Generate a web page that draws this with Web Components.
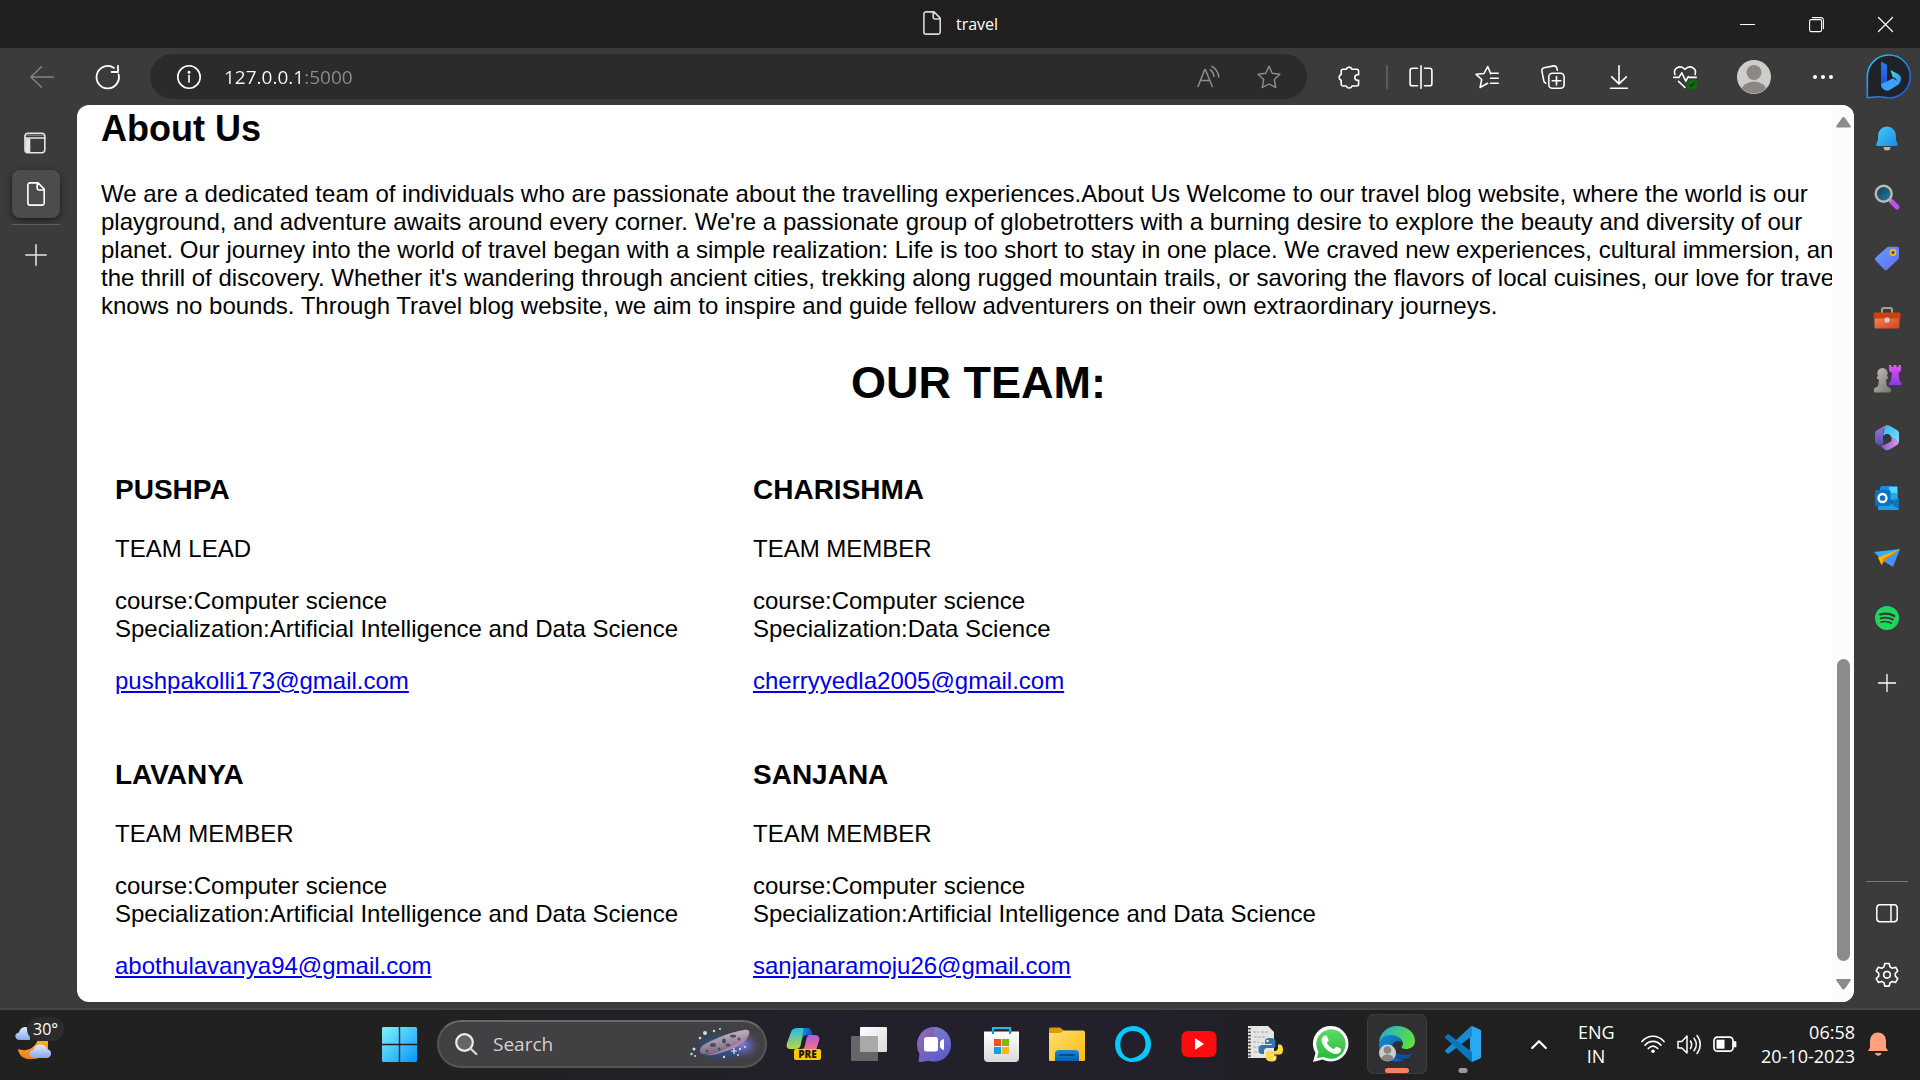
<!DOCTYPE html>
<html lang="en">
<head>
<meta charset="utf-8">
<title>travel</title>
<style>
html, body { margin: 0; height: 100%; overflow: hidden; background: #202020; }
body { font-family: "Open Sans", "Noto Sans", sans-serif; color: #fff; }
</style>
</head>
<body>
<desk-top>
  <title-bar slot="title">travel</title-bar>
  <tool-bar slot="tools"></tool-bar>
  <tab-rail slot="left"></tab-rail>
  <web-page slot="page">
    <about-section heading="About Us">We are a dedicated team of individuals who are passionate about the travelling experiences.About Us Welcome to our travel blog website, where the world is our playground, and adventure awaits around every corner. We're a passionate group of globetrotters with a burning desire to explore the beauty and diversity of our planet. Our journey into the world of travel began with a simple realization: Life is too short to stay in one place. We craved new experiences, cultural immersion, and the thrill of discovery. Whether it's wandering through ancient cities, trekking along rugged mountain trails, or savoring the flavors of local cuisines, our love for travel knows no bounds. Through Travel blog website, we aim to inspire and guide fellow adventurers on their own extraordinary journeys.</about-section>
    <team-list heading="OUR TEAM:">
      <team-member name="PUSHPA" role-name="TEAM LEAD" field="Artificial Intelligence and Data Science" mail="pushpakolli173@gmail.com"></team-member>
      <team-member name="CHARISHMA" role-name="TEAM MEMBER" field="Data Science" mail="cherryyedla2005@gmail.com"></team-member>
      <team-member name="LAVANYA" role-name="TEAM MEMBER" field="Artificial Intelligence and Data Science" mail="abothulavanya94@gmail.com"></team-member>
      <team-member name="SANJANA" role-name="TEAM MEMBER" field="Artificial Intelligence and Data Science" mail="sanjanaramoju26@gmail.com"></team-member>
    </team-list>
  </web-page>
  <side-bar slot="right"></side-bar>
  <task-bar slot="tasks"></task-bar>
</desk-top>
<script>
const line = (body, w = 24, h = w, sw = 1.6) =>
  `<svg width="${w}" height="${h}" viewBox="0 0 ${w} ${h}" fill="none" stroke="currentColor" stroke-width="${sw}" stroke-linecap="round" stroke-linejoin="round">${body}</svg>`;
const art = (body, w = 24, h = w) =>
  `<svg width="${w}" height="${h}" viewBox="0 0 ${w} ${h}">${body}</svg>`;
const grad = (id, a, b, x2 = 1, y2 = 1) =>
  `<linearGradient id="${id}" x1="0" y1="0" x2="${x2}" y2="${y2}"><stop stop-color="${a}"/><stop offset="1" stop-color="${b}"/></linearGradient>`;

const ICONS = {
  doc: line('<path d="M4 .9h8l6.200 6.200V21a2.100 2.100 0 0 1-2.100 2.100H4A2.100 2.100 0 0 1 1.900 21V3A2.100 2.100 0 0 1 4 .9zM11.200 1v5a2 2 0 0 0 2 2h5"/>', 20, 24),
  min: line('<path d="M.5 7.5h14"/>', 15, 15, 1.1),
  restore: line('<rect x=".6" y="2.6" width="12" height="12" rx="1.6"/><path d="M3.4.6H12a2.4 2.4 0 0 1 2.4 2.4v8.6"/>', 15, 15, 1.1),
  close: line('<path d="M.5.5l14 14M14.5.5l-14 14"/>', 15, 15, 1.2),
  back: line('<path d="M23.4 12H1M11.5 1.7L.9 12l10.6 10.2"/>', 24, 24, 1.4),
  refresh: line('<path d="M22.6 9.4A11.2 11.2 0 1 1 18 2.9M22 1v6h-6.4"/>', 24, 24, 1.8),
  info: line('<circle cx="12" cy="12" r="11.2"/><path d="M12 10.5v6.6"/><circle cx="12" cy="7.2" r=".7" fill="currentColor"/>'),
  read: line('<path d="M1 21.5L7.8 4.5h.6l6.8 17M3.4 15.5h9.4M13.5 4.8c2.1 1.6 3.3 3.8 3.5 6.6M15 1.3c3.7 2.2 6.3 6 6.8 10.7"/>', 24, 24, 1.5),
  star: line('<path d="M12 1.2l3.2 7 7.7 1-5.6 5.2 1.4 8-6.7-3.4-6.7 3.4 1.4-8L1.1 9.200l7.700-1z"/>', 24, 24, 1.4),
  puzzle: line('<path d="M9.300 4.200a3 3 0 0 1 5.700 0h4.600a2 2 0 0 1 2 2v3.600h-1.100a2.700 2.700 0 0 0 0 5.400h1.100V19a2 2 0 0 1-2 2H15a3 3 0 0 1-5.700 0H6.200a2 2 0 0 1-2-2v-3.700a3 3 0 0 1 0-5.700V6.200a2 2 0 0 1 2-2z"/>'),
  split: line('<path d="M12 .8v22.400M8.500 3.200H3.500A2.400 2.400 0 0 0 1.100 5.600v12.800a2.400 2.400 0 0 0 2.400 2.400h5M15.500 3.200h5a2.400 2.400 0 0 1 2.400 2.400v12.800a2.400 2.400 0 0 1-2.400 2.400h-5"/>'),
  favs: line('<path d="M15.700 8.700l-3-7.200-3.700 7L1.100 9.300l5.600 5.200-1.600 8 7.500-4.200M15.500 8.200h7.700M15.500 13.200h7.700M15.500 18.200h7.700"/>'),
  collect: line('<rect x="7.800" y="8.300" width="15.300" height="14.900" rx="3.500"/><path d="M15.500 11.500v8.500M11.200 15.700h8.600M4.800 18.200a2.600 2.600 0 0 1-1.900-1.900L.9 6.100a2.800 2.800 0 0 1 2.200-3.300L12.700.9c1.700-.3 2.700.5 3.200 2.200l.4 2"/>'),
  download: line('<path d="M12 .8v17M4.700 11.800l7.300 7 7.300-7M3.600 23.200h16.800"/>'),
  heart: line('<path d="M1.900 9.500C-.2 3.500 6.800-.8 12 4.300c5.200-5.100 12.200-.8 10.100 5.200M.8 12.400H6l2.800-4.600 4 8.400 2.500-4.600 1 .8h6.900M5.500 16.300l6.500 6.200"/><circle cx="19" cy="19.500" r="5.300" fill="#0f6b12" stroke="none"/><path d="M16.700 19.800l1.600 1.600 3-3.500" stroke="#062f08" stroke-width="1.300"/>'),
  avatar: art('<defs><clipPath id="c"><circle cx="17" cy="17" r="16.500"/></clipPath></defs><circle cx="17" cy="17" r="17" fill="#cfcdca"/><circle cx="17" cy="12.500" r="7.500" fill="#8b8785"/><ellipse cx="17" cy="31" rx="12.500" ry="9.500" fill="#8b8785" clip-path="url(#c)"/>', 34),
  dots: art('<g fill="#fff"><circle cx="4" cy="12" r="2"/><circle cx="12" cy="12" r="2"/><circle cx="20" cy="12" r="2"/></g>'),
  bing: art(`<defs>${grad('o', '#28c7f5', '#1b4fe0')}${grad('p', '#2a7df0', '#1d45dd', 0)}${grad('q', '#45e0e8', '#2b8cf3')}</defs><path d="M1.300 43.700V22.500A21.500 21.500 0 1 1 23 44c-3.500 0-6-1.300-10-1.300-4.500 0-8 1-11.700 1z" fill="#1f2227" stroke="url(#o)" stroke-width="1.600"/><path d="M15 7.500l6 3.300v17.400l-5.900 6z" fill="url(#p)"/><path d="M24.500 16l7.800 4.200c4 2.300 3.300 8-.3 10.500l-2-6.200-3.300-1.600z" fill="url(#q)"/><path d="M15 30l6.200-2.700 5.800-3 5.500 3.500c.4 1.200.2 2.100-.8 3.200l-8.400 5.300C19.500 38 15 34.500 15 30z" fill="#3aa0fb"/>`, 45),
  panes: line('<rect x="1" y="1.200" width="19.800" height="19.500" rx="3"/><path d="M1 6h20"/><path d="M1.500 6.500h4.800v14H3.500a2.200 2.200 0 0 1-2-2z" fill="currentColor" stroke="none"/><path d="M3 3.200h16" stroke-opacity=".35"/>', 22, 22),
  plus: line('<path d="M11 .8v20.400M.8 11h20.400"/>', 22, 22, 1.500),
  plusSmall: line('<path d="M9 .5v17M.5 9h17"/>', 18, 18, 1.300),
  panel: line('<rect x=".8" y=".8" width="20.400" height="17" rx="3.200"/><path d="M15 1v16.600"/>', 22, 19, 1.500),
  gear: line('<path d="M9.800 1.500h4.400l.8 3.400 2.300 1.300 3.300-1 2.200 3.800-2.500 2.400v2.800l2.500 2.400-2.200 3.800-3.300-1-2.300 1.300-.8 3.400H9.800L9 20.700l-2.300-1.300-3.300 1-2.200-3.800 2.500-2.400v-2.800L1.200 9l2.200-3.800 3.300 1L9 4.900z"/><circle cx="12" cy="12.800" r="3.300"/>', 24, 26),
  bell: art(`<defs>${grad('g', '#45d0f5', '#1a86ea')}</defs><path d="M9.500 21h7a3.500 3.500 0 0 1-7 0z" fill="#b8b8b8"/><path d="M3.500 20a1.500 1.500 0 0 1-1.200-2.200L4 14V9.500a9 9 0 0 1 18 0V14l1.700 3.800a1.500 1.500 0 0 1-1.200 2.200z" fill="url(#g)"/>`, 26, 25),
  lens: art(`<defs>${grad('g', '#12394f', '#2a80ac')}</defs><path d="M17.500 17.500l5.500 5.500" stroke="#c44bf0" stroke-width="5" stroke-linecap="round"/><path d="M15 15l2.500 2.500" stroke="#999" stroke-width="2.500"/><circle cx="9.700" cy="9.700" r="8" fill="url(#g)" stroke="#b9b9b5" stroke-width="2.400"/>`, 26, 28),
  tag: art(`<defs>${grad('g', '#5aa5ff', '#6e63f5')}</defs><path d="M14 .8h8A2 2 0 0 1 24 3v8.200c0 1-.3 1.600-1 2.300l-10.300 9.800a2.500 2.500 0 0 1-3.600 0L.8 14.700a2.300 2.300 0 0 1 0-3.300l10.800-9.700c.7-.6 1.400-.9 2.400-.9z" fill="url(#g)"/><circle cx="18" cy="6.500" r="2.600" fill="#42518c" stroke="#f2c510" stroke-width="1.700"/>`, 24),
  toolbox: art(`<defs>${grad('g', '#fa8559', '#cf451b')}</defs><path d="M9 6V2.800C9 1.500 9.800 1 11 1h6c1.200 0 2 .5 2 1.800V6" fill="none" stroke="#a6a19c" stroke-width="2"/><rect x="1.500" y="9" width="25" height="12.500" rx="1.500" fill="url(#g)"/><path d="M.5 7A1.500 1.500 0 0 1 2 5.500h24A1.500 1.500 0 0 1 27.500 7v4.500H.5z" fill="#cb400e"/><rect x="11.500" y="10.500" width="5" height="5" rx="1.500" fill="#c9d0d6"/>`, 28, 22),
  chess: art(`<defs>${grad('g', '#e453f5', '#8838e8', 0)}${grad('s', '#c4c2be', '#77736f')}</defs><path d="M16 1h2.500v2h2V1h3v2h2V1H28v6l-2.500 2 1 8 2 1.500V21H16v-2.500L18 17l1-8-3-2z" fill="url(#g)"/><path d="M9.500 4a5 5 0 0 1 4 8.200l1.500.3v2.300l-2 .7.800 6.500 4 2.500V27c0 1-.8 1.500-2 1.500H3C1.800 28.500 1 28 1 27v-2.500L5.200 22l.8-6.500-2-.7v-2.300l1.500-.3A5 5 0 0 1 9.500 4z" fill="url(#s)"/>`, 28, 29),
  m365: art(`<defs>${grad('a', '#35b5f0', '#7ae1f7')}${grad('b', '#a276d4', '#4a50b8', 0)}${grad('d', '#8c55bd', '#d79beb', 1, 0)}</defs><path d="M10 .8a5 5 0 0 1 4.500 0L22 5c1.300.8 2 1.800 2 3.300v9L16.300 12l-4-3.200L8 11z" fill="url(#a)"/><path d="M12.500.3C8.800 2.800 8.200 5 8.200 8.500v9.700L5 20.800 2 19c-1.300-.8-2-1.800-2-3.300V8.500C0 7 .7 6 2 5.200L9.500 1z" fill="url(#b)"/><path d="M5.500 20.800c3.500-.3 9.500-3.300 11-4.800V12l7.300 4.800c.3 1.200-.7 2.500-1.800 3.200l-7.500 4.500c-1.700 1-3.300 1-5 0z" fill="url(#d)"/><circle cx="12" cy="13" r="4" fill="#353344"/>`, 24, 26),
  outlook: art('<path d="M7 0h14.500A1.500 1.500 0 0 1 23 1.500V15H5V1.500z" fill="#1c8ddb"/><path d="M14 1h8v6h-8z" fill="#50d9ff"/><path d="M14 7h8v6h-8z" fill="#28a8ea"/><path d="M24 12v11a1 1 0 0 1-1 1H4a1 1 0 0 1-1-1V13l13 4z" fill="#1b9de2"/><path d="M24 12v11.500L15 17z" fill="#1274b8"/><rect y="4" width="15.500" height="16" rx="1.500" fill="#0873c6"/><circle cx="7.500" cy="12" r="4" fill="none" stroke="#fff" stroke-width="2.300"/>'),
  plane: art(`<defs>${grad('g', '#26b4f3', '#5c7df5')}</defs><path d="M0 3L26 0 8 11z" fill="#36aef0"/><path d="M26 0L19 18l-11-7z" fill="url(#g)"/><path d="M26 0L4 8.500 7.500 16 10 12z" fill="#fbb608"/><path d="M7.500 16L9 10l17-10-15.500 12z" fill="#d68a09"/>`, 26, 18),
  spotify: art('<circle cx="12" cy="12" r="12" fill="#1ed760"/><g fill="none" stroke="#343834" stroke-linecap="round"><path d="M5 8.500c5-1.400 10-.9 14.300 1.500" stroke-width="2.200"/><path d="M5.500 12.300c4.400-1.200 8.600-.8 12.400 1.300" stroke-width="1.900"/><path d="M6 16c3.800-.9 7.300-.6 10.400 1.100" stroke-width="1.600"/></g>'),
  weather: art(`<defs>${grad('g', '#f8b51d', '#ee7d1b', 0)}${grad('w', '#e2eaff', '#85a9e6', 0)}</defs><path d="M3 23c8 3 16 0 20-9h10v10c-3 5-7 9-15 9C9 34 4 30 3 23z" fill="url(#g)"/><path d="M5 14c-6 0-6-7-1-7.500C5 1 11-1 15 3v11z" fill="url(#w)"/><path d="M20 32c-7 0-7-7.500-1.500-8 1-7 12-7 13.500-1 6 1 5 9-.5 9z" fill="url(#w)"/>`, 38, 36),
  start: art(`<defs><linearGradient id="g" gradientUnits="userSpaceOnUse" x1="0" y1="0" x2="35" y2="35"><stop stop-color="#7ef2ff"/><stop offset=".5" stop-color="#43c5fb"/><stop offset="1" stop-color="#0a94fb"/></linearGradient></defs><path d="M1.500 0h15.300v16.800H0V1.500A1.500 1.500 0 0 1 1.500 0zM18.200 0h15.300A1.500 1.500 0 0 1 35 1.500v15.300H18.200zM0 18.200h16.800V35H1.500A1.500 1.500 0 0 1 0 33.500zM18.200 18.200H35v15.300a1.500 1.500 0 0 1-1.500 1.500H18.200z" fill="url(#g)"/>`, 35),
  find: art('<circle cx="9.500" cy="9.500" r="8.300" fill="#656567" stroke="#ececec" stroke-width="2.200"/><path d="M15.500 15.500l5.800 5.500" stroke="#d4d4d4" stroke-width="2.400" stroke-linecap="round"/>', 23),
  asteroid: art(`<defs><radialGradient id="h"><stop stop-color="#1268ac"/><stop offset=".55" stop-color="#27508a" stop-opacity=".75"/><stop offset="1" stop-color="#3b3b60" stop-opacity="0"/></radialGradient><radialGradient id="v"><stop stop-color="#7f7bea"/><stop offset="1" stop-color="#50508c" stop-opacity="0"/></radialGradient>${grad('r', '#d3c9d6', '#75677d', .3)}</defs><ellipse cx="31" cy="20" rx="31" ry="16" fill="url(#h)"/><ellipse cx="53" cy="18" rx="18" ry="15" fill="url(#v)"/><path d="M10 24c0-4 3-6 7-8C27 11 40 5 54 3c5-1 7 2 4 6-5 6-13 9-21 12-7 3-14 6-21 6-4 1-6-1-6-3z" fill="url(#r)"/><path d="M15 28c11-1 22-7 31-11 6-3 11-6 13-12 1 10-17 18-26 20-6 2-12 4-18 3z" fill="#bd7fae"/><g fill="#514a5d"><ellipse cx="23" cy="18" rx="3" ry="2"/><ellipse cx="34" cy="14" rx="2" ry="2.500"/><ellipse cx="43" cy="9" rx="3" ry="1.500"/><ellipse cx="38" cy="18" rx="2.500" ry="1.500"/><circle cx="17" cy="24" r="1.500"/><circle cx="29" cy="22" r="1.500"/><circle cx="49" cy="12" r="1.500"/></g><g fill="#b7e5f5"><circle cx="15" cy="6" r="2"/><circle cx="4" cy="22" r="1.500"/><circle cx="10" cy="11" r="1.300"/><circle cx="24" cy="4" r="1.200"/><circle cx="30" cy="2" r="1"/><circle cx="1.500" cy="27" r="1.200"/><circle cx="5" cy="29" r="1"/><circle cx="34" cy="30" r="1.200"/><circle cx="50" cy="22" r="1.200"/><circle cx="55" cy="20" r="1"/><circle cx="48" cy="28" r="1"/></g><path d="M44 21v6M41 24h6" stroke="#cbefff" stroke-width="1.200"/>`, 72, 34),
  copilot: art(`<defs>${grad('g', '#20b8f3', '#b8d443', .15)}${grad('m', '#a65ae8', '#f76f82', .1)}${grad('t', '#1b93dd', '#1449ca', 1, 0)}</defs><path d="M11 0h9c4 0 5 2 6 7h-6c-4 0-4 4-5 9-1 4-2 5-6 5H5c-4 0-5-2-4-6L5 4c1-3 3-4 6-4z" fill="url(#g)"/><path d="M17 0h3c4 0 5 2 6 7h-6c-2 0-3 1-4 4-1-4 2-6 1-11z" fill="url(#t)"/><path d="M23 7h6c4 0 5 3 4 6l-3 9H15l3-2c2-4 2-13 5-13z" fill="url(#m)"/><rect x="8" y="21" width="27" height="11" rx="2" fill="#ffc800"/><text x="21.500" y="30" text-anchor="middle" font-family="Open Sans, sans-serif" font-size="10" font-weight="800" fill="#1c1600">PRE</text>`, 34, 32),
  taskview: art(`<defs>${grad('g', '#fff', '#dadada')}</defs><rect x="9" y="0" width="27" height="25" rx="1.200" fill="url(#g)"/><rect x="0" y="9" width="27" height="25" rx="1.200" fill="#666"/><path d="M9 9h18v16H9z" fill="#a9a9a9"/>`, 36, 34),
  chat: art(`<defs>${grad('g', '#9a69b0', '#5259cf')}${grad('k', '#7597df', '#5556c8', 0)}</defs><path d="M17 0c10 0 17 8 17 17.500S27 34.500 17 34.500c-3 0-4-.8-6-.8-3 1-6 1.500-9.500 1L2.500 27A17 17 0 0 1 0 18C0 8 7 0 17 0z" fill="url(#g)"/><path d="M17 0c10 0 17 8 17 17.500S27 34.500 17 34.500z" fill="url(#k)" opacity=".4"/><rect x="7" y="10" width="14" height="14.500" rx="2.500" fill="#fff"/><path d="M27 12v11a5 5 0 0 1-4-5.500 5 5 0 0 1 4-5.500z" fill="#fff"/>`, 36, 35),
  store: art(`<defs>${grad('g', '#fff', '#d9d9d9', 0)}</defs><path d="M9 7V1.200h17V7" fill="none" stroke="#27b4f1" stroke-width="2.200"/><path d="M0 4.500h35V31a4 4 0 0 1-4 4H4a4 4 0 0 1-4-4z" fill="url(#g)"/><path d="M9 4v3M26 4v3" stroke="#1596dc" stroke-width="2.200"/><path d="M10 12h7v7h-7z" fill="#f25022"/><path d="M18 12h7v7h-7z" fill="#7fba00"/><path d="M10 20h7v7h-7z" fill="#00a4ef"/><path d="M18 20h7v7h-7z" fill="#ffb900"/>`, 35),
  folder: art(`<defs>${grad('g', '#ffdf70', '#fdb911')}${grad('b', '#1789db', '#075fae', 0)}</defs><path d="M0 2A1.500 1.500 0 0 1 1.500.500H11l4 3V8H0z" fill="#dc9900"/><path d="M0 6h11l4-2.500h19A2 2 0 0 1 36 5.500V33a1 1 0 0 1-1 1H1a1 1 0 0 1-1-1z" fill="url(#g)"/><path d="M6 34V27a4 4 0 0 1 4-4h16a4 4 0 0 1 4 4v7z" fill="url(#b)"/><path d="M11 28h14" stroke="#07488b" stroke-width="2" stroke-linecap="round"/>`, 36, 35),
  alexa: art('<path fill-rule="evenodd" d="M18 0c10 0 18 8 18 18s-7 17.500-18 18H15v-3.500C6 30 5 22 5.500 16 6.500 9 11 5 18 5s12.500 5 12.500 13c0 6-4 13-15.500 14.500V36C5 34 0 27 0 18S8 0 18 0z" fill="#08c9fb"/>', 36),
  youtube: art('<rect x=".5" y="2" width="35" height="26" rx="6" fill="#fc0d0d"/><path d="M14 9v12l9-6z" fill="#fff"/>', 36, 30),
  python: art('<path d="M1 0h20l6 6v26H1z" fill="#e5e5e5"/><path d="M2.500 2v29" stroke="#333" stroke-width="2.500" stroke-dasharray="1.600 1.800"/><path d="M6 6h6M14 6h7M7 11h12M6 16h6M14 17h3M6 21h6M7 26h6" stroke="#a5a5a5" stroke-width="1.200" stroke-dasharray="3 1"/><path d="M23 12c-4 0-5 1.500-5 4v2h7v1H15c-3 0-3.500 3-3.500 5s1 4 3.500 4h2v-3c0-2 1.500-3 3-3h6c1.500 0 2.500-1 2.500-3v-4c0-2-2-3-5.500-3z" fill="#3474a7"/><path d="M24.500 35.500c4 0 5-1.500 5-4v-2h-6v-1H33c2.500 0 3-3 3-5s-1-5-3-5h-2v3c0 2-1.500 3.500-3 3.500h-6c-2 0-3 1-3 3v4c0 2 2 3.500 5.500 3.500z" fill="#ffd848"/><circle cx="20.500" cy="15" r="1.200" fill="#fff"/><circle cx="27" cy="32.500" r="1.200" fill="#fff"/>', 36),
  whatsapp: art(`<defs>${grad('g', '#60d868', '#26bb3c', 0)}</defs><path d="M0 36l2.500-9A17.800 17.800 0 1 1 9.500 33.500z" fill="#fff"/><path d="M4 32l1.600-6A14.700 14.700 0 1 1 11 31z" fill="url(#g)"/><path d="M12.500 9.500c.8 0 1.200.1 1.600 1l1.500 3.500c.2.600 0 1.200-1.700 3 1.600 3 4 4.900 7 6.200 2-2.400 2.300-2.700 3-2.400l3.500 1.700c.7.400.8.6.6 1.700-.5 2.800-3.300 4.100-5.500 3.700C16 27 11 22 9 16.500c-1.200-3.500.500-6.500 3.500-7z" fill="#fff"/>`, 36),
  edge: art(`<defs>${grad('g', '#23a6d9', '#5ade45', 1, .3)}${grad('b', '#168cc8', '#0959ad')}</defs><path d="M0 16C1 7 8 0 18 0c11 0 18 7 18 15 0 6-5 8-9 8-3 0-5-1-4-2.500 2-2 1-9-6-9.500-7-.7-11 3-17 5z" fill="url(#g)"/><path d="M0 18C1 12 6 9 12 9c6 0 10 3 11 7-6-3-10 1-10 6 0 5 4 12 12 12-12 5-25-2-25-16z" fill="url(#b)"/><path d="M12 18c-2 8 4 16 14 15 4-.8 6-3 8-6-8 4-20 2-22-9z" fill="#114f9c"/><circle cx="8.500" cy="27" r="8.500" fill="#cfcdca"/><circle cx="8.500" cy="24" r="3.800" fill="#8a8583"/><path d="M2.500 33c0-6 12-6 12 0-3 3-9 3-12 0z" fill="#8a8583"/>`, 36),
  vscode: art('<path d="M27 0l8 3.600c.7.300 1 .8 1 1.500v26c0 .7-.3 1.200-1 1.500L27 36l-2-3V3z" fill="#29a9f2"/><path d="M27 0v10L4 27.500c-.6.400-1.200.4-1.700 0l-2-1.900c-.5-.5-.5-1.200 0-1.700L25.500.8C26 .3 26.500 0 27 0z" fill="#1b89d0"/><path d="M27 36V26L4 8.500c-.6-.4-1.200-.4-1.700 0l-2 1.900c-.5.500-.5 1.200 0 1.700l25.200 23.100c.5.500 1 .8 1.500.8z" fill="#0c76bb"/>', 36),
  up: line('<path d="M1.200 9L8 2.200 14.800 9"/>', 16, 11, 2.200),
  wifi: line('<path d="M1 7.500c6-7 16-7 22 0M4 11.200c4.500-5 11.500-5 16 0M7.300 14.500c3-3 6.400-3 9.400 0"/><circle cx="12" cy="17.200" r="1.800" fill="currentColor" stroke="none"/>', 24, 20, 1.700),
  volume: line('<path d="M1 7.500h3.800L10 2v17l-5.200-5H1zM13.500 7c1.500 2.500 1.500 5 0 7.500M17 4.300c3 4 3 8.500 0 12.500M20 1.500c4.300 5.500 4.300 12.500 0 18"/>', 24, 21, 1.500),
  battery: line('<rect x="1" y="1.200" width="19" height="14" rx="3.500"/><path d="M21 6h1.500v4.500H21z" fill="currentColor"/><rect x="3.500" y="3.700" width="8" height="9" fill="currentColor" stroke="none"/>', 24, 17, 1.700),
  notify: art('<path d="M7 21h6.500a3.300 3.300 0 0 1-6.500 0z" fill="#ffa07c"/><path d="M0 19l2-3.500V8.500a8 8 0 0 1 16 0v7l2 3.500z" fill="#ffa17d"/>', 20, 24),
  arrowUp: art('<path d="M7.500 0c.6 0 1 .3 1.400.8L14.600 9c.5.800 0 1.500-.9 1.500H1.300C.4 10.500-.1 9.800.4 9L6.100.8C6.500.3 6.900 0 7.500 0z" fill="#8b8b8b"/>', 15, 11),
  arrowDown: art('<path d="M7.500 10.500c.6 0 1-.3 1.400-.8l5.700-8.200c.5-.8 0-1.500-.9-1.500H1.300C.4 0-.1.700.4 1.500l5.700 8.200c.4.500.8.800 1.400.8z" fill="#8b8b8b"/>', 15, 11)
};

/* Shared base: renders the class's view into an open shadow root. */
class Part extends HTMLElement {
  connectedCallback() {
    if (this.shadowRoot) return;
    const t = document.createElement('template');
    t.innerHTML = `<style>:host{display:block;box-sizing:border-box}*{box-sizing:border-box}${this.css()}</style>${this.view()}`;
    this.attachShadow({ mode: 'open' }).append(t.content.cloneNode(true));
  }
  css() { return ''; }
  view() { return '<slot></slot>'; }
}
const define = (name, css, view) => customElements.define(name, class extends Part {
  css() { return css; }
  view() { return typeof view === 'function' ? view(this) : view; }
});
const btn = (icon, label, cls = '') => `<icon-button icon="${icon}" label="${label}" class="${cls}"></icon-button>`;

define('ui-icon', ':host{display:inline-flex;flex:none}svg{display:block;overflow:visible}', e => ICONS[e.getAttribute('name')]);

define('icon-button', `
:host{display:flex;flex:none;width:66px;height:60px}
button{flex:1;display:flex;align-items:center;justify-content:center;padding:0;border:0;background:none;color:inherit;font:inherit}`,
e => `<button type="button" aria-label="${e.getAttribute('label')}"><ui-icon name="${e.getAttribute('icon')}"></ui-icon></button>`);

define('desk-top', `
:host{display:grid;height:100vh;grid-template-rows:48px 57px minmax(0,1fr) 72px;background:#3b3b3b}
.middle{display:grid;grid-template-columns:77px minmax(0,1fr) 66px;min-height:0}`,
`<slot name="title"></slot><slot name="tools"></slot>
<div class="middle"><slot name="left"></slot><slot name="page"></slot><slot name="right"></slot></div>
<slot name="tasks"></slot>`);

define('title-bar', `
:host{display:grid;grid-template-columns:1fr auto 1fr;align-items:center;background:#202020;font-size:16px;line-height:26px}
.name{display:flex;align-items:end;gap:14px;grid-column:2}
.name ui-icon{color:#d8d8d8;align-self:start}
.win{display:flex;justify-content:flex-end}
.win icon-button{width:69px;height:48px}`,
`<div class="name"><ui-icon name="doc"></ui-icon><span><slot></slot></span></div>
<div class="win">${btn('min', 'Minimize')}${btn('restore', 'Restore')}${btn('close', 'Close')}</div>`);

define('tool-bar', `
:host{display:flex;align-items:center;padding-left:9px}
icon-button{height:57px}
.off{color:#858585}
.address{flex:1;display:flex;align-items:center;height:45px;margin:0 9px;padding:0 8px 0 27px;border-radius:23px;background:#2b2b2b}
.address icon-button{width:60px;height:45px;color:#8f8f8f}
input{flex:1;min-width:0;height:40px;margin-left:21px;padding:0 0 0 2px;border:0;outline:0;font:19px/28px "Open Sans","Noto Sans",sans-serif;color:#fff;
background:linear-gradient(90deg,#fff 82px,#8d8d8d 82px);-webkit-background-clip:text;background-clip:text;-webkit-text-fill-color:transparent}
.rule{width:6px;height:24px;border-right:2px solid #5c5c5c}
.me{width:72px}.bing{width:64px}`,
`${btn('back', 'Back', 'off')}${btn('refresh', 'Refresh')}
<div class="address"><ui-icon name="info"></ui-icon><input type="text" aria-label="Address" value="127.0.0.1:5000">${btn('read', 'Read aloud')}${btn('star', 'Add to favorites')}</div>
${btn('puzzle', 'Extensions')}<span class="rule"></span>${btn('split', 'Split screen')}${btn('favs', 'Favorites')}${btn('collect', 'Collections')}${btn('download', 'Downloads')}${btn('heart', 'Browser essentials')}${btn('avatar', 'Profile', 'me')}${btn('dots', 'Settings and more')}${btn('bing', 'Bing chat', 'bing')}`);

define('tab-rail', `
:host{display:flex;flex-direction:column;align-items:center;padding:12px 8px 0 3px;color:#e6e6e6}
icon-button{width:48px}
.top{width:50px;height:52px;margin-bottom:1px;align-self:flex-start;margin-left:7px}
.tab{height:48px;border-radius:8px;background:#4c4c4c;box-shadow:0 2px 6px #0009;color:#fff}
hr{width:48px;height:1px;margin:6px 0 0;border:0;background:#5e5e5e}`,
`${btn('panes', 'Tab actions', 'top')}${btn('doc', 'travel', 'tab')}<hr>${btn('plus', 'New tab')}`);

define('side-bar', `
:host{display:flex;flex-direction:column;justify-content:space-between;padding:3px 0}
hr{width:42px;height:1px;margin:0 auto;border:0;background:#777}
.add{height:70px}.panel{height:63px}`,
`<div>${btn('bell', 'Notifications')}${btn('lens', 'Search')}${btn('tag', 'Shopping')}${btn('toolbox', 'Tools')}${btn('chess', 'Games')}${btn('m365', 'Microsoft 365')}${btn('outlook', 'Outlook')}${btn('plane', 'Drop')}${btn('spotify', 'Spotify')}${btn('plusSmall', 'Customize', 'add')}</div>
<div><hr>${btn('panel', 'Hide sidebar', 'panel')}${btn('gear', 'Settings')}</div>`);

define('web-page', `
:host{display:flex;margin-bottom:6px;min-height:0;border-radius:12px;overflow:hidden;background:#fff;color:#000;font:24px/28px "Liberation Sans",Arial,sans-serif}
main{flex:1;min-width:0;overflow:hidden;padding-top:3px}
.inner{width:100%;margin-left:24px}
.scroll{display:flex;flex-direction:column;align-items:center;flex:none;width:22px;padding:12px 0 12px 1px;background:#fcfcfc}
.track{flex:1;width:13px;display:flex;flex-direction:column;padding:6px 0 18px}
.space{flex:526}.thumb{flex:302;border-radius:7px;background:#8b8b8b}`,
`<main><div class="inner"><slot></slot></div></main>
<div class="scroll"><ui-icon name="arrowUp"></ui-icon><div class="track"><div class="space"></div><div class="thumb"></div></div><ui-icon name="arrowDown"></ui-icon></div>`);

define('about-section', `h2{margin:0 0 30px;font-size:36px;line-height:42px}p{margin:0}`,
e => `<h2>${e.getAttribute('heading')}</h2><p><slot></slot></p>`);

define('team-list', `
h1{margin:37px 0 55px;text-align:center;font-size:45px;line-height:52px}
.grid{display:grid;grid-template-columns:max-content max-content;column-gap:75px;row-gap:54px;margin:0 14px}`,
e => `<h1>${e.getAttribute('heading')}</h1><div class="grid"><slot></slot></div>`);

define('team-member', `
h3{margin:10px 0 29px;font-size:28px;line-height:32px}
p{margin:0 0 24px}p:last-child{margin:0}
a{color:#00e}`,
e => `<h3>${e.getAttribute('name')}</h3><p>${e.getAttribute('role-name')}</p>
<p>course:Computer science<br>Specialization:${e.getAttribute('field')}</p>
<p><a href="mailto:${e.getAttribute('mail')}">${e.getAttribute('mail')}</a></p>`);

define('search-box', `
:host{display:flex;align-items:center;width:330px;height:48px;margin:0 3px 0 5px;padding:0 3px 0 16px;border:2px solid #555457;border-top-color:#68676a;border-radius:24px;background:#414042}
input{flex:1;min-width:0;margin-left:13px;padding:0 2px;border:0;outline:0;background:none;color:#d2d2d2;font:19px/28px "Open Sans","Noto Sans",sans-serif}
input::placeholder{color:#d2d2d2;opacity:1}`,
`<ui-icon name="find"></ui-icon><input type="search" aria-label="Search" placeholder="Search"><ui-icon name="asteroid"></ui-icon>`);

define('task-app', `
:host{display:flex;position:relative;width:66px;height:60px;padding:0 3px}
icon-button{flex:1;border-radius:7px}
:host([active]) icon-button{background:#302f32;box-shadow:inset 0 0 0 1px #3d3c3f}
i{position:absolute;bottom:1px;left:50%;transform:translateX(-50%);height:5px;border-radius:3px;width:9px;background:#9b9b9b}
:host([active]) i{width:24px;background:#f58063}`,
e => btn(e.getAttribute('icon'), e.getAttribute('label')) + (e.hasAttribute('open') ? '<i></i>' : ''));

const app = (icon, label, flags = '') => `<task-app icon="${icon}" label="${label}" ${flags}></task-app>`;
define('task-bar', `
:host{display:grid;grid-template-columns:366fr auto 424fr;align-items:center;border-top:2px solid #444;padding-bottom:2px;background:linear-gradient(90deg,#212121 20%,#22202a 45%,#22202a 60%,#202020 75%)}
.weather{position:relative;justify-self:start;display:flex;margin-left:15px;padding:0;border:0;background:none}
.weather b{position:absolute;left:12px;top:-9px;padding:0 6px;border-radius:12px;background:#2c2c2c;color:#fff;font:16px/24px "Open Sans","Noto Sans",sans-serif}
nav{display:flex;align-items:center}
.tray{display:flex;align-items:center;justify-content:flex-end;padding-right:32px;font-size:18px;line-height:24px}
.up{width:24px;display:flex;justify-content:center}
.lang{width:36px;margin:0 27px;text-align:center}
.status{display:flex;align-items:center;gap:12px}
.clock{width:100px;margin:0 13px 0 18px;text-align:right}`,
`<button class="weather" type="button" aria-label="Weather"><ui-icon name="weather"></ui-icon><b>30°</b></button>
<nav>${btn('start', 'Start')}<search-box></search-box>${app('copilot', 'Copilot')}${app('taskview', 'Task view')}${app('chat', 'Chat')}${app('store', 'Store')}${app('folder', 'File Explorer')}${app('alexa', 'Alexa')}${app('youtube', 'YouTube')}${app('python', 'Python')}${app('whatsapp', 'WhatsApp')}${app('edge', 'Edge', 'active open')}${app('vscode', 'Visual Studio Code', 'open')}</nav>
<div class="tray"><span class="up"><ui-icon name="up"></ui-icon></span><div class="lang">ENG<br>IN</div>
<div class="status"><ui-icon name="wifi"></ui-icon><ui-icon name="volume"></ui-icon><ui-icon name="battery"></ui-icon></div>
<div class="clock">06:58<br>20-10-2023</div><ui-icon name="notify"></ui-icon></div>`);
</script>
</body>
</html>
